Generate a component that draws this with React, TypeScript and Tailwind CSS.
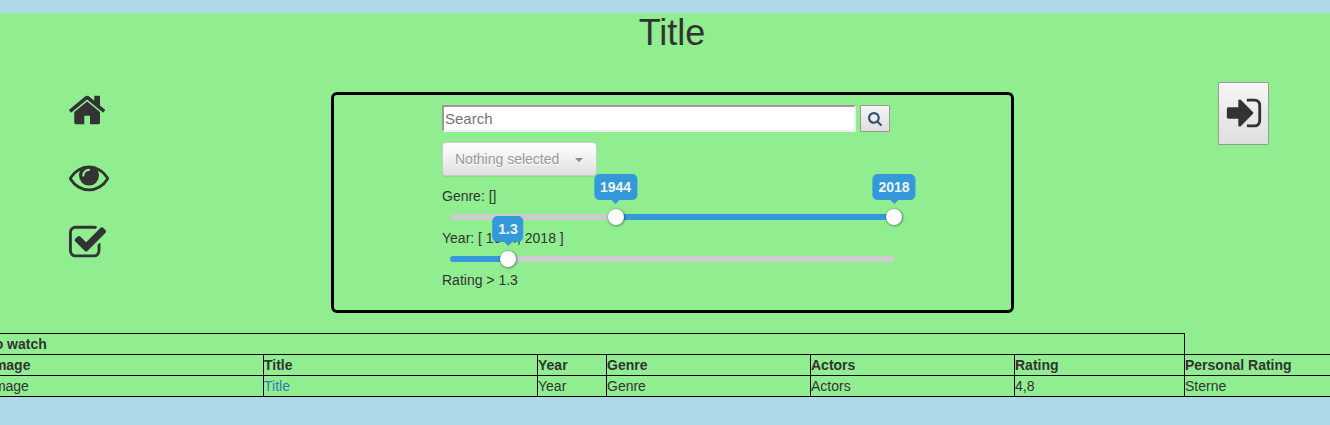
import React from "react";

const HOME =
  "M1408 992v480q0 26-19 45t-45 19h-384v-384h-256v384h-384q-26 0-45-19t-19-45v-480q0-1 .5-3t.5-3l575-474 575 474q1 2 1 6zm223-69l-62 74q-8 9-21 11h-3q-13 0-21-7l-692-577-692 577q-12 8-24 7-13-2-21-11l-62-74q-8-10-7-23.500t11-21.500l719-599q32-26 76-26t76 26l244 204v-195q0-14 9-23t23-9h192q14 0 23 9t9 23v408l219 182q10 8 11 21.500t-7 23.500z";
const EYE =
  "M1664 960q-152-236-381-353 61 104 61 225 0 185-131.500 316.500t-316.500 131.500-316.500-131.500-131.500-316.500q0-121 61-225-229 117-381 353 133 205 333.500 326.500t434.500 121.500 434.500-121.500 333.500-326.500zm-720-384q0-20-14-34t-34-14q-125 0-214.500 89.500t-89.500 214.500q0 20 14 34t34 14 34-14 14-34q0-86 61-147t147-61q20 0 34-14t14-34zm848 384q0 34-20 69-140 230-376.500 368.500t-499.500 138.500-499.500-139-376.500-368q-20-35-20-69t20-69q140-229 376.500-368t499.500-139 499.500 139 376.500 368q20 35 20 69z";
const CHECK =
  "M1472 930v318q0 119-84.500 203.500t-203.500 84.500h-832q-119 0-203.500-84.500t-84.500-203.500v-832q0-119 84.500-203.500t203.500-84.500h832q63 0 117 25 15 7 18 23 3 17-9 29l-49 49q-10 10-23 10-3 0-9-2-23-6-45-6h-832q-66 0-113 47t-47 113v832q0 66 47 113t113 47h832q66 0 113-47t47-113v-254q0-13 9-22l64-64q10-10 23-10 6 0 12 3 20 8 20 29zm231-489l-814 814q-24 24-57 24t-57-24l-430-430q-24-24-24-57t24-57l110-110q24-24 57-24t57 24l263 263 647-647q24-24 57-24t57 24l110 110q24 24 24 57t-24 57z";
const SIGN_IN =
  "M1312 896q0 26-19 45l-544 544q-19 19-45 19t-45-19-19-45v-288h-448q-26 0-45-19t-19-45v-384q0-26 19-45t45-19h448v-288q0-26 19-45t45-19 45 19l544 544q19 19 19 45zm352-352v704q0 119-84.500 203.500t-203.500 84.500h-320q-13 0-22.500-9.500t-9.500-22.500q0-4-1-20t-.5-26.500 3-23.500 10-19.500 20.500-6.500h320q66 0 113-47t47-113v-704q0-66-47-113t-113-47h-312l-11.500-1-11.500-3-8-5.500-7-9-2-13.500q0-4-1-20t-.5-26.500 3-23.500 10-19.500 20.500-6.500h320q119 0 203.500 84.500t84.500 203.500z";
const SEARCH =
  "M1216 832q0-185-131.500-316.500t-316.500-131.500-316.500 131.500-131.500 316.500 131.500 316.500 316.500 131.500 316.500-131.500 131.500-316.500zm512 832q0 52-38 90t-90 38q-54 0-90-38l-343-342q-179 124-399 124-143 0-273.500-55.500t-225-150-150-225-55.500-273.500 55.500-273.500 150-225 225-150 273.500-55.500 273.500 55.500 225 150 150 225 55.500 273.500q0 220-124 399l343 343q37 37 37 90z";

function Icon({ d, x = 0, className }: { d: string; x?: number; className: string }) {
  return (
    <svg viewBox={`${x} 0 1792 1792`} className={className} fill="currentColor">
      <path d={d} />
    </svg>
  );
}

function Handle({ at, label }: { at: number; label: string }) {
  return (
    <div className="absolute top-[-5px] size-4 -translate-x-1/2" style={{ left: at }}>
      <div className="size-4 rounded-full bg-white shadow-[0.5px_0.5px_2px_1px_rgba(0,0,0,0.32)]" />
      <div className="absolute bottom-[25px] left-1/2 -translate-x-1/2 rounded-[5px] border border-[#3498db] bg-[#3498db] px-[5px] py-[2px] text-center text-[14px] leading-5 font-bold whitespace-nowrap text-white/90">
        {label}
        <span className="absolute top-full left-1/2 -translate-x-1/2 border-x-[5px] border-t-[5px] border-x-transparent border-t-[#3498db]" />
      </div>
    </div>
  );
}

function Slider({ from, to, handles }: { from: number; to: number; handles: { at: number; label: string }[] }) {
  return (
    <div className="relative mt-2 mb-2 ml-2 h-[6px] w-[444px] rounded-[3px] bg-[#ccc]">
      <div className="absolute inset-y-0 rounded-[3px] bg-[#3498db]" style={{ left: from, width: to - from }} />
      {handles.map((h) => (
        <Handle key={h.label} {...h} />
      ))}
    </div>
  );
}

const COLUMNS = "grid grid-cols-[274px_274px_69px_204px_204px_170px_260px]";

export default function App() {
  const header = ["Image", "Title", "Year", "Genre", "Actors", "Rating", "Personal Rating"];
  const row = ["Image", "Title", "Year", "Genre", "Actors", "4,8", "Sterne"];
  return (
    <div className="h-[425px] w-full overflow-hidden bg-[#add8e6] pt-[13px] font-['Liberation_Sans',Arial,sans-serif] text-[14px] leading-5 text-[#333]">
      <div className="flex h-[384px] flex-col bg-[#90ee90]">
        <h1 className="h-[69px] pl-[14px] text-center text-[36px] leading-[40px]">Title</h1>

        <div className="flex h-[238px] justify-between">
          <nav className="flex w-[331px] flex-col pt-[7.5px] pl-[69px]">
            <Icon d={HOME} x={20} className="size-10" />
            <Icon d={EYE} className="mt-[27px] size-10" />
            <Icon d={CHECK} x={64} className="mt-[26px] size-10" />
          </nav>

          <section className="mt-[10px] h-[221px] w-[683px] rounded-[6px] border-[3px] border-black pt-[10px] pl-[108px]">
            <div className="flex gap-1">
              <input
                placeholder="Search"
                className="h-[27px] w-[414px] border-2 border-t-[#9a9a9a] border-r-[#eee] border-b-[#eee] border-l-[#9a9a9a] bg-white px-px text-[15px] placeholder:text-[#757575]"
              />
              <button className="flex h-[27px] w-[30px] items-center justify-center rounded-[1px] border border-[#999] bg-linear-to-b from-[#f6f6f6] to-[#dedede] text-[#34526b]">
                <Icon d={SEARCH} x={64} className="size-[15px]" />
              </button>
            </div>
            <button className="mt-[10px] flex h-[34px] w-[155px] items-center justify-between rounded-[4px] border border-[#ccc] bg-linear-to-b from-white to-[#e0e0e0] px-3 text-[#999] shadow-[0_1px_1px_rgba(0,0,0,0.08)] [text-shadow:0_1px_0_#fff]">
              Nothing selected
              <span className="mt-px mr-px border-x-4 border-t-4 border-x-transparent border-t-[#888]" />
            </button>
            <div className="mt-[10px]">Genre: []</div>
            <Slider from={165.5} to={444} handles={[{ at: 165.5, label: "1944" }, { at: 444, label: "2018" }]} />
            <div>Year: [ 1944, 2018 ]</div>
            <Slider from={0} to={58} handles={[{ at: 58, label: "1.3" }]} />
            <div>Rating &gt; 1.3</div>
          </section>

          <div className="flex w-[316px] justify-end pr-[61px]">
            <button className="flex h-[63px] w-[51px] items-center justify-center rounded-[1px] border border-[#999] bg-linear-to-b from-[#f6f6f6] to-[#dedede] pb-[2px]">
              <Icon d={SIGN_IN} className="size-10" />
            </button>
          </div>
        </div>

        <div className="mt-[13px] ml-[-11px] w-[1455px] leading-5">
          <div className="h-[21px] w-[1196px] border-x border-t border-black font-bold">to watch</div>
          <div className={`${COLUMNS} border-l border-black font-bold`}>
            {header.map((text) => (
              <div key={text} className="h-[21px] border-t border-r border-black">{text}</div>
            ))}
          </div>
          <div className={`${COLUMNS} border-l border-black`}>
            {row.map((text) => (
              <div key={text} className="h-[22px] border-y border-r border-black">
                {text === "Title" ? <a className="text-[#337ab7]">{text}</a> : text}
              </div>
            ))}
          </div>
        </div>
      </div>
    </div>
  );
}
